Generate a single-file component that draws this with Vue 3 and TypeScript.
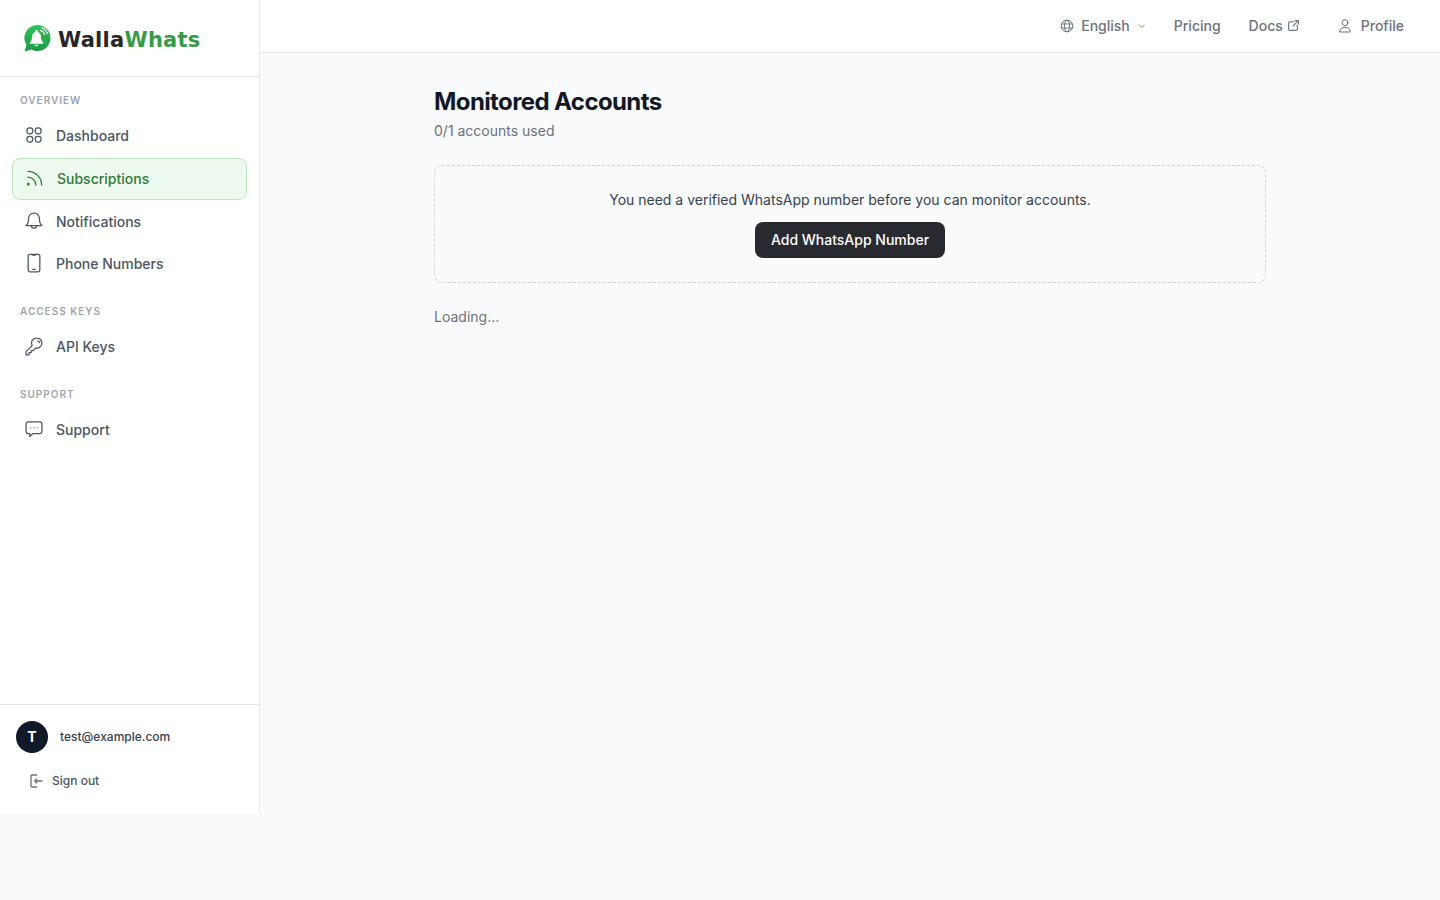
<template>
  <div class="layout">
    <aside class="sidebar">
      <div class="brand">
        <svg class="brand-icon" width="28" height="28" viewBox="0 0 28 28">
          <defs>
            <linearGradient id="brandFill" x1="0" y1="0" x2="0" y2="1">
              <stop offset="0" stop-color="#2fc45a" />
              <stop offset="1" stop-color="#1c9a45" />
            </linearGradient>
          </defs>
          <path d="M14.500 1a13 13 0 0 1 0 26c-2.200 0-4.200-.5-6-1.500L1.600 27.500l1.800-6.600A13 13 0 0 1 14.500 1z" fill="url(#brandFill)" />
          <circle cx="13.500" cy="7.300" r="1.300" fill="#fff" />
          <path d="M13.500 7.800c-3 .2-4.500 2.500-4.500 5.300 0 2.800-.8 4.300-2.200 5.500v1.100h13.400v-1.100c-1.400-1.200-2.200-2.700-2.200-5.500 0-2.800-1.500-5.100-4.500-5.300z" fill="#fff" />
          <path d="M11.300 20.800a2.400 2.400 0 0 0 4.400 0z" fill="#fff" />
          <path d="M17.500 6.300a6.200 6.200 0 0 1 4.200 4.200M18.500 3.600a9 9 0 0 1 5.800 5.800" fill="none" stroke="#fff" stroke-width="1.300" stroke-linecap="round" />
        </svg>
        <span class="brand-name">Walla<span class="brand-accent">Whats</span></span>
      </div>

      <nav class="nav">
        <div v-for="group in groups" :key="group.title" class="nav-group">
          <div class="nav-title">{{ group.title }}</div>
          <a
            v-for="item in group.items"
            :key="item.label"
            class="nav-item"
            :class="{ active: item.active }"
          >
            <svg class="nav-icon" width="20" height="20" viewBox="0 0 24 24" fill="none" stroke="currentColor" stroke-width="1.500" stroke-linecap="round" stroke-linejoin="round">
              <path v-for="d in item.paths" :key="d" :d="d" />
            </svg>
            <span>{{ item.label }}</span>
          </a>
        </div>
      </nav>

      <div class="account">
        <div class="user">
          <div class="avatar">T</div>
          <span class="email">test@example.com</span>
        </div>
        <a class="signout">
          <svg width="16" height="16" viewBox="0 0 24 24" fill="none" stroke="currentColor" stroke-width="2" stroke-linecap="round" stroke-linejoin="round">
            <path d="M13 3H6a1.500 1.500 0 0 0-1.500 1.500v15A1.500 1.500 0 0 0 6 21h7" />
            <path d="M13 15l-3-3 3-3M10 12h11" />
          </svg>
          <span>Sign out</span>
        </a>
      </div>
    </aside>

    <div class="main">
      <header class="topbar">
        <a class="top-link lang">
          <svg width="14" height="14" viewBox="0 0 24 24" fill="none" stroke="currentColor" stroke-width="1.700">
            <circle cx="12" cy="12" r="10" />
            <ellipse cx="12" cy="12" rx="4.500" ry="10" />
            <path d="M2.500 8.500h19M2.500 15.500h19" />
          </svg>
          <span>English</span>
          <svg class="chevron" width="10" height="10" viewBox="0 0 24 24" fill="none" stroke="currentColor" stroke-width="2" stroke-linecap="round" stroke-linejoin="round">
            <path d="M6 9.500l6 6 6-6" />
          </svg>
        </a>
        <a class="top-link pricing">Pricing</a>
        <a class="top-link docs">
          <span>Docs</span>
          <svg width="13" height="13" viewBox="0 0 24 24" fill="none" stroke="currentColor" stroke-width="2" stroke-linecap="round" stroke-linejoin="round">
            <path d="M13 5H5a2 2 0 0 0-2 2v12a2 2 0 0 0 2 2h12a2 2 0 0 0 2-2v-8" />
            <path d="M15 3h6v6M21 3L11 13" />
          </svg>
        </a>
        <a class="top-link profile">
          <svg width="16" height="16" viewBox="0 0 24 24" fill="none" stroke="currentColor" stroke-width="1.500" stroke-linecap="round" stroke-linejoin="round">
            <circle cx="12" cy="7" r="4.500" />
            <path d="M4 20.500c0-3.900 3.400-6.500 8-6.500s8 2.600 8 6.500c0 .4-.3.500-.6.500H4.600c-.3 0-.6-.1-.6-.500z" />
          </svg>
          <span>Profile</span>
        </a>
      </header>

      <main class="content">
        <h1>Monitored Accounts</h1>
        <p class="usage">{{ used }}/{{ limit }} accounts used</p>

        <div class="notice">
          <p>You need a verified WhatsApp number before you can monitor accounts.</p>
          <button type="button">Add WhatsApp Number</button>
        </div>

        <p class="loading">Loading...</p>
      </main>
    </div>
  </div>
</template>

<script setup lang="ts">
interface NavItem {
  label: string;
  paths: string[];
  active?: boolean;
}

const used = 0;
const limit = 1;

const groups: { title: string; items: NavItem[] }[] = [
  {
    title: 'OVERVIEW',
    items: [
      {
        label: 'Dashboard',
        paths: [
          'M6.500 3.500h1a3 3 0 0 1 3 3v1a3 3 0 0 1-3 3h-1a3 3 0 0 1-3-3v-1a3 3 0 0 1 3-3z',
          'M16.500 3.500h1a3 3 0 0 1 3 3v1a3 3 0 0 1-3 3h-1a3 3 0 0 1-3-3v-1a3 3 0 0 1 3-3z',
          'M6.500 13.500h1a3 3 0 0 1 3 3v1a3 3 0 0 1-3 3h-1a3 3 0 0 1-3-3v-1a3 3 0 0 1 3-3z',
          'M16.500 13.500h1a3 3 0 0 1 3 3v1a3 3 0 0 1-3 3h-1a3 3 0 0 1-3-3v-1a3 3 0 0 1 3-3z',
        ],
      },
      {
        label: 'Subscriptions',
        active: true,
        paths: [
          'M3.500 4c9.100 0 16.500 7.400 16.500 16.500',
          'M3.500 11c5.200 0 9.500 4.300 9.500 9.500',
          'M5 19.500a1 1 0 1 1-2 0 1 1 0 0 1 2 0z',
        ],
      },
      {
        label: 'Notifications',
        paths: [
          'M12 2.500a6.500 6.500 0 0 0-6.500 6.500c0 4.500-1 7-3 8.500h19c-2-1.500-3-4-3-8.500A6.500 6.500 0 0 0 12 2.500z',
          'M8.800 17.500a3.200 3.200 0 0 0 6.400 0',
        ],
      },
      {
        label: 'Phone Numbers',
        paths: [
          'M7 1.500h10a2 2 0 0 1 2 2v17a2 2 0 0 1-2 2H7a2 2 0 0 1-2-2v-17a2 2 0 0 1 2-2z',
          'M10 1.500v1h4v-1',
          'M10.500 19.500h3',
        ],
      },
    ],
  },
  {
    title: 'ACCESS KEYS',
    items: [
      {
        label: 'API Keys',
        paths: [
          'M15.500 2.500a6 6 0 0 1 6 6 6 6 0 0 1-7.300 5.800L11 17.500H8.500V20H6v2.500H2.500v-3.700l7.300-7.200A6 6 0 0 1 15.500 2.500z',
          'M16.500 6a2 2 0 0 1 2 2',
        ],
      },
    ],
  },
  {
    title: 'SUPPORT',
    items: [
      {
        label: 'Support',
        paths: [
          'M5 3.500h14a2.500 2.500 0 0 1 2.500 2.500v9a2.500 2.500 0 0 1-2.500 2.500h-8.500L7 21v-3.500H5A2.500 2.500 0 0 1 2.500 15V6A2.500 2.500 0 0 1 5 3.500z',
          'M8 10.500h.01M12 10.500h.01M16 10.500h.01',
        ],
      },
    ],
  },
];
</script>

<style>
html,
body {
  background: #f9fafb;
}
</style>

<style scoped>
.layout {
  display: flex;
  align-items: flex-start;
  min-height: 900px;
  background: #f9fafb;
  font-family: Inter, "Liberation Sans", sans-serif;
}

.sidebar {
  width: 260px;
  height: 813px;
  flex-shrink: 0;
  box-sizing: border-box;
  display: flex;
  flex-direction: column;
  background: #fff;
  border-right: 1px solid #e5e7eb;
}

.brand {
  height: 77px;
  box-sizing: border-box;
  display: flex;
  align-items: center;
  gap: 7px;
  padding: 0 0 0 23px;
  border-bottom: 1px solid #e5e7eb;
}

.brand-name {
  padding-top: 4px;
  font-family: "DejaVu Sans", sans-serif;
  font-size: 21px;
  font-weight: 700;
  line-height: 28px;
  color: #27272a;
  letter-spacing: 0.26px;
}

.brand-accent {
  color: #359b45;
}

.nav {
  flex: 1;
  padding: 16px 12px 0;
}

.nav-group {
  margin-bottom: 20px;
}

.nav-title {
  padding: 0 8px;
  margin-bottom: 7px;
  font-size: 10px;
  line-height: 14px;
  font-weight: 600;
  letter-spacing: 1px;
  color: #9ca3af;
}

.nav-item {
  display: flex;
  align-items: center;
  gap: 12px;
  height: 42px;
  box-sizing: border-box;
  padding: 0 12px;
  font-size: 14px;
  font-weight: 500;
  color: #4b5563;
  border-radius: 8px;
}

.nav-item.active {
  margin-top: 2px;
  padding-bottom: 2px;
  color: #2e7d32;
  background: #edf8ef;
  border: 1px solid #b9e6bd;
}

.nav-icon {
  flex-shrink: 0;
}

.account {
  border-top: 1px solid #e5e7eb;
  padding: 16px 16px 0;
  height: 109px;
  box-sizing: border-box;
}

.user {
  display: flex;
  align-items: center;
  gap: 12px;
}

.avatar {
  width: 32px;
  height: 32px;
  padding-bottom: 1px;
  box-sizing: border-box;
  border-radius: 50%;
  background: #111827;
  color: #fff;
  font-size: 14px;
  font-weight: 700;
  display: flex;
  align-items: center;
  justify-content: center;
}

.email {
  padding-bottom: 2px;
  font-size: 12px;
  font-weight: 500;
  color: #374151;
}

.signout {
  display: flex;
  align-items: center;
  gap: 8px;
  margin-top: 20px;
  padding-left: 12px;
  font-size: 12px;
  font-weight: 500;
  line-height: 16px;
  color: #4b5563;
}

.signout svg {
  color: #6b7280;
}

.main {
  flex: 1;
  min-width: 0;
}

.topbar {
  height: 53px;
  box-sizing: border-box;
  display: flex;
  align-items: center;
  justify-content: flex-end;
  padding: 0 36px 1px 0;
  background: #fff;
  border-bottom: 1px solid #e5e7eb;
}

.top-link {
  display: flex;
  align-items: center;
  font-size: 14px;
  font-weight: 500;
  color: #6b7280;
}

.lang {
  gap: 7px;
}

.pricing {
  margin-left: 27px;
}

.docs {
  margin-left: 28px;
  gap: 4px;
}

.profile {
  margin-left: 37px;
  gap: 8px;
}

.content {
  width: 832px;
  margin: 0 auto;
  padding-top: 33px;
}

h1 {
  margin: 0;
  font-size: 24px;
  line-height: 32px;
  font-weight: 700;
  letter-spacing: -0.6px;
  color: #111827;
}

.usage {
  margin: 3px 0 0;
  font-size: 14px;
  line-height: 20px;
  color: #6b7280;
}

.notice {
  margin-top: 24px;
  height: 118px;
  box-sizing: border-box;
  padding-top: 24px;
  display: flex;
  flex-direction: column;
  align-items: center;
  border: 1px dashed #d1d5db;
  border-radius: 8px;
}

.notice p {
  margin: 0;
  font-size: 14px;
  line-height: 20px;
  color: #374151;
}

button {
  margin-top: 12px;
  height: 36px;
  padding: 0 16px 1px;
  border: none;
  border-radius: 8px;
  background: #292a30;
  color: #fff;
  font-family: inherit;
  font-size: 14px;
  font-weight: 500;
}

.loading {
  margin: 24px 0 0;
  font-size: 14px;
  line-height: 20px;
  color: #6b7280;
}
</style>
